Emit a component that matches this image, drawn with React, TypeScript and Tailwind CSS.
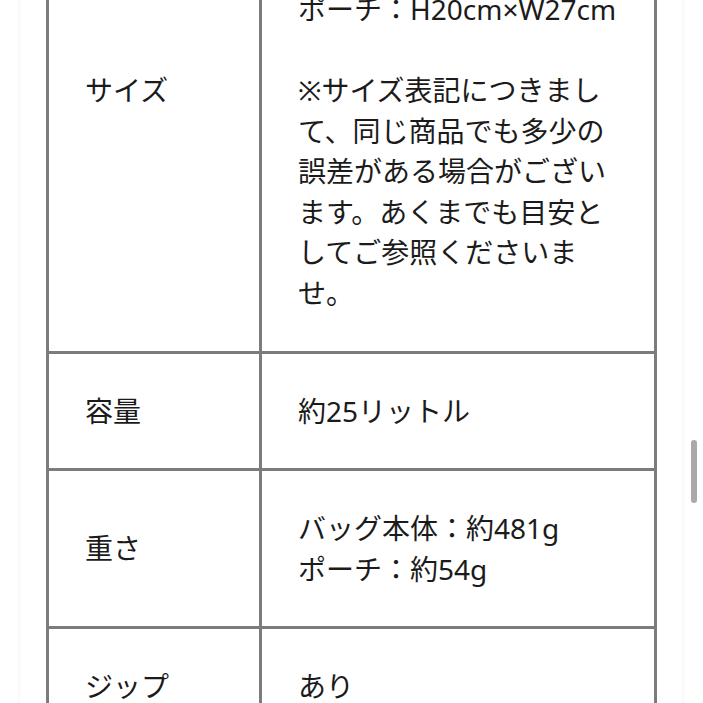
import React from 'react';

type Row = {
    label: string;
    lines: string[];
};

// the first row's top part is above the viewport; the hidden lines only set its height
const rows: Row[] = [
    {
        label: 'サイズ',
        lines: [
            'バッグ本体：H45cm×',
            'W30cm×D16cm',
            '（持ち手含まず）',
            'ポーチ：H20cm×W27cm',
            '',
            '※サイズ表記につきまして、同じ商品でも多少の誤差がある場合がございます。あくまでも目安としてご参照くださいませ。',
        ],
    },
    { label: '容量', lines: ['約25リットル'] },
    { label: '重さ', lines: ['バッグ本体：約481g', 'ポーチ：約54g'] },
    { label: 'ジップ', lines: ['あり'] },
    { label: 'ポケット', lines: ['外側：1', '内側：2'] },
];

const App: React.FC = () => {
    return (
        <div
            className="relative w-[703px] h-[703px] overflow-hidden bg-white text-[#1b1b1b]"
            style={{ fontFamily: '"Noto Sans", "Noto Sans CJK JP", sans-serif' }}
        >
            <div className="ml-[20px] w-[662px] min-h-[900px] pl-[26px] bg-white shadow-[0_0_5px_rgba(0,0,0,0.06)]">
                <table className="-mt-[173px] w-[611px] table-fixed border-collapse text-[28px] leading-[40.6px]">
                    <colgroup>
                        <col className="w-[213px]" />
                        <col />
                    </colgroup>
                    <tbody>
                        {rows.map((row) => (
                            <tr key={row.label}>
                                <td className="border-[3px] border-[#7c7c7c] px-[36px] py-[37px] align-middle">
                                    {row.label}
                                </td>
                                <td className="border-[3px] border-[#7c7c7c] px-[36px] py-[37px] align-middle">
                                    {row.lines.map((line, i) =>
                                        line === '' ? (
                                            <div key={i} className="h-[40.6px]" />
                                        ) : (
                                            <div key={i}>{line}</div>
                                        )
                                    )}
                                </td>
                            </tr>
                        ))}
                    </tbody>
                </table>
            </div>

            {/* scrollbar thumb */}
            <div className="absolute left-[691px] top-[440px] w-[6px] h-[63px] rounded-full bg-[#a9a9a9]" />
        </div>
    );
};

export default App;
